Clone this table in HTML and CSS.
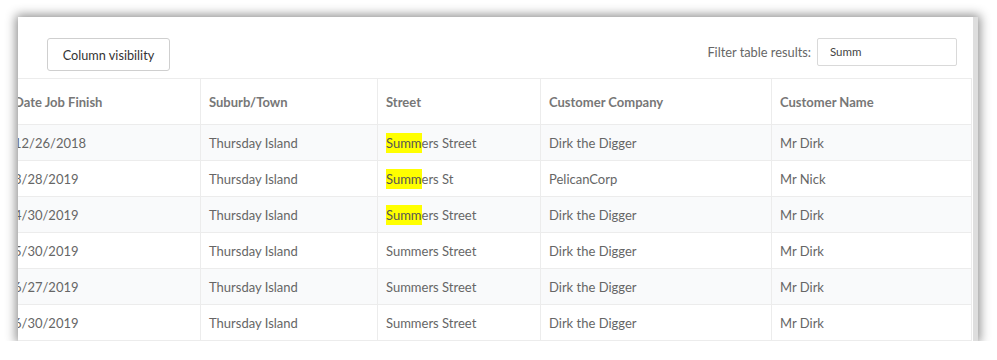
FILE: index.html
```html
<!DOCTYPE html>
<html>
<head>
<meta charset="utf-8">
<link rel="stylesheet" href="styles.css">
</head>
<body>
<div class="panel">
  <div class="toolbar">
    <button class="btn">Column visibility</button>
    <label class="filter">Filter table results: <span class="input">Summ</span></label>
  </div>
  <div class="scroller">
    <table class="grid">
      <colgroup>
        <col class="c1"><col class="c2"><col class="c3"><col class="c4"><col class="c5">
      </colgroup>
      <thead>
        <tr><th>Date Job Finish</th><th>Suburb/Town</th><th>Street</th><th>Customer Company</th><th>Customer Name</th></tr>
      </thead>
      <tbody>
        <tr class="odd"><td>12/26/2018</td><td>Thursday Island</td><td><mark>Summ</mark>ers Street</td><td>Dirk the Digger</td><td>Mr Dirk</td></tr>
        <tr><td>3/28/2019</td><td>Thursday Island</td><td><mark>Summ</mark>ers St</td><td>PelicanCorp</td><td>Mr Nick</td></tr>
        <tr class="odd"><td>4/30/2019</td><td>Thursday Island</td><td><mark>Summ</mark>ers Street</td><td>Dirk the Digger</td><td>Mr Dirk</td></tr>
        <tr><td>5/30/2019</td><td>Thursday Island</td><td>Summers Street</td><td>Dirk the Digger</td><td>Mr Dirk</td></tr>
        <tr class="odd"><td>6/27/2019</td><td>Thursday Island</td><td>Summers Street</td><td>Dirk the Digger</td><td>Mr Dirk</td></tr>
        <tr><td>6/30/2019</td><td>Thursday Island</td><td>Summers Street</td><td>Dirk the Digger</td><td>Mr Dirk</td></tr>
      </tbody>
    </table>
  </div>
</div>
</body>
</html>
```

FILE: styles.css
```css
html, body {
  margin: 0;
  padding: 0;
  background: #ffffff;
}
body {
  padding: 17px 0 0 18px;
  font-family: "Lato", "Open Sans", sans-serif;
  color: #666;
}
.panel {
  width: 960px;
  height: 324px;
  background: #fff;
  border-right: 5px solid #dedede;
  box-sizing: border-box;
  box-shadow: 0 0 10px 2px rgba(0,0,0,0.45);
  overflow: hidden;
}
.toolbar {
  display: flex;
  justify-content: space-between;
  align-items: flex-start;
  padding: 21px 16px 0 29px;
  height: 61px;
  box-sizing: border-box;
}
.btn {
  width: 123px;
  height: 33px;
  border: 1px solid #cfcfcf;
  border-radius: 3px;
  background: #fff;
  font-family: "Lato", "Open Sans", sans-serif;
  font-size: 12.7px;
  color: #333;
  padding: 0;
}
.filter {
  display: flex;
  align-items: center;
  gap: 6px;
  font-size: 12.8px;
  color: #666;
}
.input {
  width: 140px;
  height: 28px;
  box-sizing: border-box;
  border: 1px solid #d9d9d9;
  border-radius: 2px;
  padding: 0 12px;
  font-size: 11.5px;
  line-height: 26px;
  color: #444;
}
.scroller {
  overflow: hidden;
}
.grid {
  margin-left: -13px;
  border-collapse: collapse;
  table-layout: fixed;
  width: 966px;
  font-size: 13px;
}
.c1 { width: 195px; }
.c2 { width: 177px; }
.c3 { width: 163px; }
.c4 { width: 231px; }
.c5 { width: 200px; }
.grid th, .grid td {
  border: 1px solid #ececec;
  text-align: left;
  padding: 0 8px;
  white-space: nowrap;
}
.grid th {
  height: 45px;
  font-weight: bold;
  color: #777;
}
.grid td {
  height: 35px;
  color: #666;
}
.grid tr.odd td {
  background: #f9fafb;
}
mark {
  background: #ffff00;
  color: #555;
  padding: 2px 0;
}
```
